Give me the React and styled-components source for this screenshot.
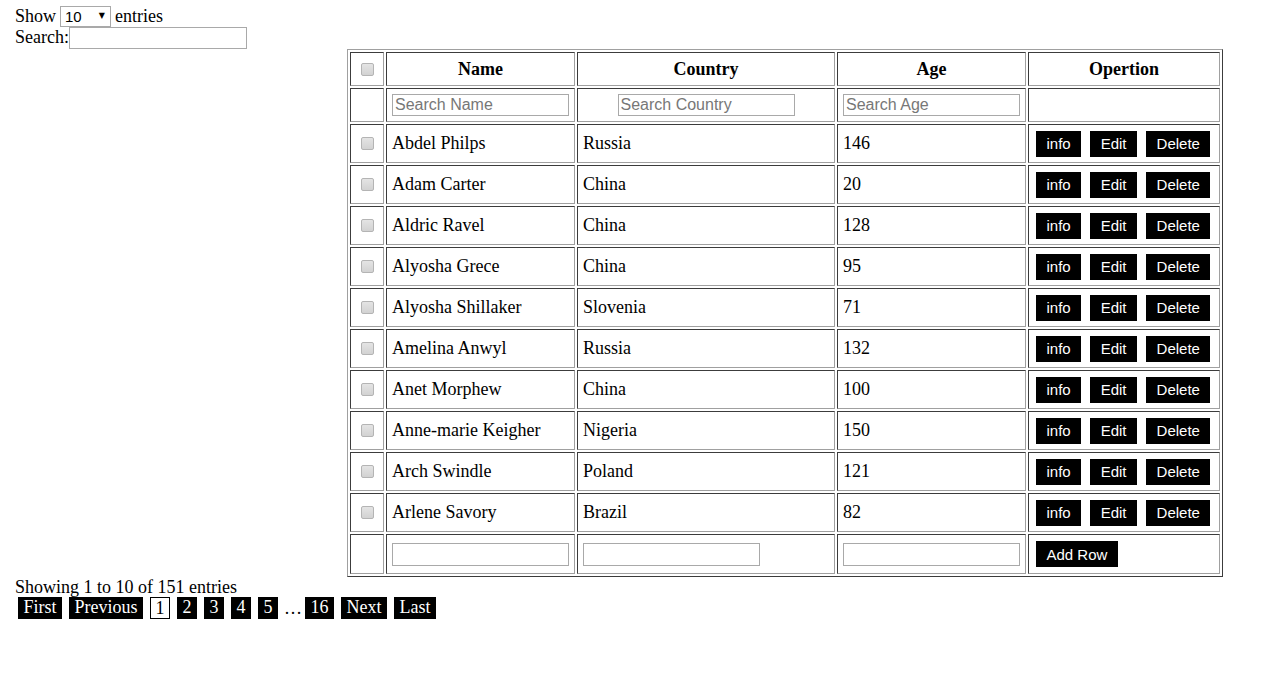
import React from 'react'
import { styled, createGlobalStyle } from 'styled-components'

const rows = [
  ['Abdel Philps', 'Russia', 146],
  ['Adam Carter', 'China', 20],
  ['Aldric Ravel', 'China', 128],
  ['Alyosha Grece', 'China', 95],
  ['Alyosha Shillaker', 'Slovenia', 71],
  ['Amelina Anwyl', 'Russia', 132],
  ['Anet Morphew', 'China', 100],
  ['Anne-marie Keigher', 'Nigeria', 150],
  ['Arch Swindle', 'Poland', 121],
  ['Arlene Savory', 'Brazil', 82],
]

const pages = ['1', '2', '3', '4', '5']

const App = () => {
  return (
    <Page>
      <GlobalStyle />
      <Controls>
        <Line>
          Show
          <SelectWrap>
            <Select defaultValue="10">
              <option>10</option>
              <option>25</option>
              <option>50</option>
            </Select>
            <Arrow>▼</Arrow>
          </SelectWrap>
          entries
        </Line>
        <Line>
          Search:<SearchInput type="text" />
        </Line>
      </Controls>

      <Table>
        <colgroup>
          <col style={{ width: 34 }} />
          <col style={{ width: 189 }} />
          <col style={{ width: 258 }} />
          <col style={{ width: 189 }} />
          <col style={{ width: 192 }} />
        </colgroup>
        <thead>
          <tr>
            <Head><Check type="checkbox" /></Head>
            <Head>Name</Head>
            <Head>Country</Head>
            <Head>Age</Head>
            <Head>Opertion</Head>
          </tr>
          <tr>
            <Head></Head>
            <Head><FilterInput placeholder="Search Name" /></Head>
            <Head><FilterInput placeholder="Search Country" /></Head>
            <Head><FilterInput placeholder="Search Age" /></Head>
            <Head></Head>
          </tr>
        </thead>
        <tbody>
          {rows.map(([name, country, age]) => (
            <tr key={name}>
              <Cell $center><Check type="checkbox" /></Cell>
              <Cell>{name}</Cell>
              <Cell>{country}</Cell>
              <Cell>{age}</Cell>
              <Cell>
                <Actions>
                  <ActionButton>info</ActionButton>
                  <ActionButton>Edit</ActionButton>
                  <ActionButton>Delete</ActionButton>
                </Actions>
              </Cell>
            </tr>
          ))}
          <tr>
            <Cell $tall></Cell>
            <Cell $tall><FilterInput $add /></Cell>
            <Cell $tall><FilterInput $add /></Cell>
            <Cell $tall><FilterInput $add /></Cell>
            <Cell $tall>
              <Actions>
                <ActionButton>Add Row</ActionButton>
              </Actions>
            </Cell>
          </tr>
        </tbody>
      </Table>

      <Info>Showing 1 to 10 of 151 entries</Info>
      <Pager>
        <PageButton>First</PageButton>
        <PageButton>Previous</PageButton>
        {pages.map(p => (
          <PageButton key={p} $current={p === '1'}>{p}</PageButton>
        ))}
        <Dots>…</Dots>
        <PageButton>16</PageButton>
        <PageButton>Next</PageButton>
        <PageButton>Last</PageButton>
      </Pager>
    </Page>
  )
}

const GlobalStyle = createGlobalStyle`
  html, body {
    margin: 0;
    padding: 0;
    background: #fff;
  }
  body {
    font-family: "Liberation Serif", "Times New Roman", serif;
    font-size: 18px;
    color: #000;
  }
`

const Page = styled.div`
  padding: 6px 15px 20px;
`

const Controls = styled.div`
  display: flex;
  flex-direction: column;
`

const Line = styled.div`
  display: flex;
  align-items: center;
  height: 21px;
`

const SelectWrap = styled.span`
  position: relative;
  display: inline-block;
  margin: 0 4px;
`

const Select = styled.select`
  display: block;
  appearance: none;
  width: 51px;
  height: 21px;
  font-family: "Liberation Sans", Arial, sans-serif;
  font-size: 15px;
  color: #000;
  border: 1px solid #a9a9a9;
  border-radius: 0;
  background: #fff;
  padding: 0 4px;
`

const Arrow = styled.span`
  position: absolute;
  right: 6px;
  top: 5px;
  font-family: "DejaVu Sans", sans-serif;
  font-size: 8px;
  line-height: 10px;
  pointer-events: none;
`

const SearchInput = styled.input`
  box-sizing: border-box;
  width: 178px;
  height: 22px;
  border: 1px solid #a9a9a9;
  margin: 0;
`

const Table = styled.table`
  margin-left: 332px;
  margin-top: 1px;
  width: 876px;
  table-layout: fixed;
  border-collapse: separate;
  border-spacing: 2px;
  border: 1px solid;
  border-color: #a0a0a0 #3c3c3c #3c3c3c #a0a0a0;
`

const Head = styled.th`
  box-sizing: border-box;
  height: 34px;
  padding: 0 5px;
  text-align: center;
  font-weight: bold;
  border: 1px solid;
  border-color: #3c3c3c #a0a0a0 #a0a0a0 #3c3c3c;
`

const Cell = styled.td`
  box-sizing: border-box;
  height: ${p => (p.$tall ? '40px' : '39px')};
  padding: 0 5px;
  text-align: ${p => (p.$center ? 'center' : 'left')};
  border: 1px solid;
  border-color: #3c3c3c #a0a0a0 #a0a0a0 #3c3c3c;
  white-space: nowrap;
`

const Check = styled.input`
  appearance: none;
  display: block;
  margin: 0 auto;
  width: 13px;
  height: 13px;
  border: 1px solid #b4b4b4;
  border-radius: 2px;
  background: linear-gradient(#e4e4e4, #d2d2d2);
`

const FilterInput = styled.input`
  display: block;
  box-sizing: border-box;
  width: 177px;
  height: ${p => (p.$add ? '23px' : '22px')};
  margin: ${p => (p.$add ? '0' : '0 auto')};
  padding: 0 2px;
  border: 1px solid #a9a9a9;
  font-family: "Liberation Sans", Arial, sans-serif;
  font-size: 16px;
  font-weight: normal;

  &::placeholder {
    color: #777;
  }
`

const Actions = styled.div`
  display: flex;
  gap: 9px;
  padding-left: 2px;
`

const ActionButton = styled.button`
  height: 26px;
  padding: 0 10.5px;
  border: none;
  background: #000;
  color: #fff;
  font-family: "Liberation Sans", Arial, sans-serif;
  font-size: 15px;
`

const Info = styled.div`
  height: 20px;
  line-height: 20px;
`

const Pager = styled.div`
  display: flex;
  align-items: center;
  gap: 7px;
  padding-left: 3px;
`

const PageButton = styled.span`
  box-sizing: border-box;
  height: 22px;
  line-height: 21px;
  background: ${p => (p.$current ? '#fff' : '#000')};
  color: ${p => (p.$current ? '#000' : '#fff')};
  border: ${p => (p.$current ? '1px solid #000' : 'none')};
  padding: ${p => (p.$current ? '0 4.5px' : '0 5.5px')};
`

const Dots = styled.span`
  margin: 0 -4px 0 -1px;
`

export default App
